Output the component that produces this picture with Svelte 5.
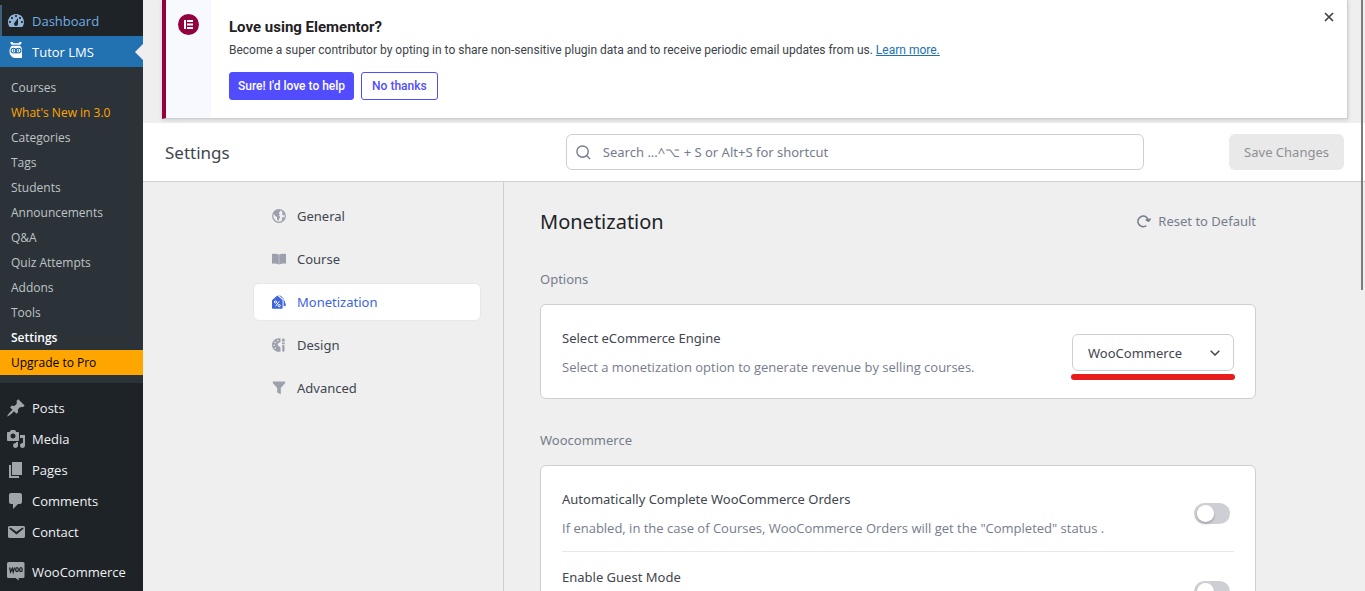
<script lang="ts">
  let engine = $state('WooCommerce');
  let search = $state('');
  let showNotice = $state(true);

  const submenu = [
    { label: 'Courses' },
    { label: "What's New in 3.0", kind: 'new' },
    { label: 'Categories' },
    { label: 'Tags' },
    { label: 'Students' },
    { label: 'Announcements' },
    { label: 'Q&A' },
    { label: 'Quiz Attempts' },
    { label: 'Addons' },
    { label: 'Tools' },
    { label: 'Settings', kind: 'current' },
    { label: 'Upgrade to Pro', kind: 'upgrade' },
  ];

  const dashboardIcon = 'M3.76 16h12.48c1.1-1.37 1.76-3.11 1.76-5 0-4.42-3.58-8-8-8s-8 3.58-8 8c0 1.89.66 3.63 1.76 5zM10 4c.55 0 1 .45 1 1s-.45 1-1 1-1-.45-1-1 .45-1 1-1zM6 6c.55 0 1 .45 1 1s-.45 1-1 1-1-.45-1-1 .45-1 1-1zm8 0c.55 0 1 .45 1 1s-.45 1-1 1-1-.45-1-1 .45-1 1-1zm-5.37 5.55L12 7v6c0 1.1-.9 2-2 2s-2-.9-2-2c0-.57.24-1.08.63-1.45zM4 10c.55 0 1 .45 1 1s-.45 1-1 1-1-.45-1-1 .45-1 1-1zm12 0c.55 0 1 .45 1 1s-.45 1-1 1-1-.45-1-1 .45-1 1-1z';

  const menu = [
    { label: 'Posts', icon: 'M10.44 3.02l1.82-1.82 6.36 6.35-1.83 1.82c-1.05-.68-2.48-.57-3.41.36l-.75.75c-.92.93-1.04 2.35-.35 3.41l-1.83 1.82-2.41-2.41-2.8 2.79c-.42.42-3.38 2.71-3.8 2.29s1.86-3.39 2.28-3.81l2.79-2.79L4.1 9.36l1.83-1.82c1.05.69 2.48.57 3.4-.36l.75-.75c.93-.92 1.05-2.35.36-3.41z' },
    { label: 'Media', icon: 'M13 11V4c0-.55-.45-1-1-1h-1.67L9 1H5L3.67 3H2c-.55 0-1 .45-1 1v7c0 .55.45 1 1 1h10c.55 0 1-.45 1-1zM7 4.5c1.38 0 2.5 1.12 2.5 2.5S8.38 9.5 7 9.5 4.5 8.38 4.5 7 5.62 4.5 7 4.5zM14 6h5v10.5c0 1.38-1.12 2.5-2.5 2.5S14 17.88 14 16.5s1.12-2.5 2.5-2.5c.17 0 .34.02.5.05V9h-3V6zm-4 8.05V13h2v3.5c0 1.38-1.12 2.5-2.5 2.5S7 17.88 7 16.5 8.12 14 9.5 14c.17 0 .34.02.5.05z' },
    { label: 'Pages', icon: 'M6 15V2h10v13H6zm-1 1h8v2H3V5h2v11z' },
    { label: 'Comments', icon: 'M5 2h9c1.1 0 2 .9 2 2v7c0 1.1-.9 2-2 2h-2l-5 5v-5H5c-1.1 0-2-.9-2-2V4c0-1.1.9-2 2-2z' },
    { label: 'Contact', icon: 'M3.87 4h13.25C18.37 4 19 4.59 19 5.79v8.42c0 1.19-.63 1.79-1.88 1.79H3.87c-1.25 0-1.88-.6-1.88-1.79V5.79c0-1.2.63-1.79 1.88-1.79zm6.62 8.6l6.74-5.53c.24-.2.43-.66.13-1.07-.29-.41-.82-.42-1.17-.17l-5.7 3.86L4.8 5.83c-.35-.25-.88-.24-1.17.17-.3.41-.11.87.13 1.07z' },
  ];

  const tabs = ['General', 'Course', 'Monetization', 'Design', 'Advanced'];
  let activeTab = $state('Monetization');

  let options = $state([
    {
      id: 'auto-complete',
      title: 'Automatically Complete WooCommerce Orders',
      text: 'If enabled, in the case of Courses, WooCommerce Orders will get the "Completed" status .',
      on: false,
    },
    { id: 'guest-mode', title: 'Enable Guest Mode', text: '', on: false },
  ]);
</script>

<div class="shell">
  <aside class="admin-menu">
    <a class="item dashboard" href="#dashboard">
      <svg viewBox="0 0 20 20"><path fill-rule="evenodd" d={dashboardIcon} /></svg>
      Dashboard
    </a>
    <a class="item active" href="#tutor">
      <svg viewBox="0 0 20 20">
        <path d="M4.500 0h2l1 1.200h5l1-1.200h2v1.200l-1.800 2.300c1.500 1.200 2.300 2.700 2.300 4.700V16h-6.200C6 16 3.500 13 3.500 9.200c0-2.700 1-4.500 2.700-5.700L4.500 1.200z" />
        <g fill="none" stroke="#2271b1" stroke-width="1.100">
          <path d="M6 3.200h8M10 6.200v5.600" />
          <circle cx="7.500" cy="8.600" r="2.400" />
          <circle cx="12.500" cy="8.600" r="2.400" />
          <path d="M7.700 7.300v2.400M12.300 7.300v2.400" />
        </g>
      </svg>
      Tutor LMS
    </a>
    <ul class="submenu">
      {#each submenu as entry}
        <li><a class={entry.kind} href="#{entry.label}">{entry.label}</a></li>
      {/each}
    </ul>
    {#each menu as entry}
      <a class="item" href="#{entry.label}">
        <svg viewBox="0 0 20 20"><path fill-rule="evenodd" d={entry.icon} /></svg>
        {entry.label}
      </a>
    {/each}
    <a class="item woo" href="#woocommerce">
      <svg viewBox="0 0 20 20">
        <path d="M2.500 0h14.500A1.500 1.500 0 0 1 18.500 1.500v13a1.500 1.500 0 0 1-1.500 1.500H12.500l.5 2.500L9.500 16H2.500A1.500 1.500 0 0 1 1 14.500v-13A1.500 1.500 0 0 1 2.500 0z" />
        <g fill="none" stroke="#1d2327" stroke-width="1.300">
          <path d="M3.700 5.500l.9 4.500 1.700-3.500.9 3.500L8.600 5.500" />
          <ellipse cx="11" cy="7.700" rx="1.300" ry="2" />
          <ellipse cx="14.900" cy="7.700" rx="1.300" ry="2" />
        </g>
      </svg>
      WooCommerce
    </a>
  </aside>

  <main>
    {#if showNotice}
      <section class="notice">
        <div class="notice-aside">
          <svg viewBox="0 0 21 21">
            <circle cx="10.500" cy="10.500" r="10.500" fill="#93003f" />
            <path d="M6 6h2v9H6zM9 6h6v2H9zM9 9.500h6v2H9zM9 13h6v2H9z" fill="#fff" />
          </svg>
        </div>
        <div class="notice-body">
          <h3>Love using Elementor?</h3>
          <p>Become a super contributor by opting in to share non-sensitive plugin data and to receive periodic email updates from us. <a href="#learn">Learn more.</a></p>
          <div class="notice-actions">
            <button class="primary">Sure! I'd love to help</button>
            <button onclick={() => (showNotice = false)}>No thanks</button>
          </div>
        </div>
        <button class="dismiss" aria-label="Dismiss" onclick={() => (showNotice = false)}>
          <svg viewBox="0 0 10 10"><path d="M1 1l8 8M9 1L1 9" /></svg>
        </button>
      </section>
    {/if}

    <header class="topbar">
      <h1>Settings</h1>
      <label class="search">
        <svg viewBox="0 0 16 16"><circle cx="7" cy="7" r="6" /><path d="M11.500 11.500L15 15" /></svg>
        <input type="text" aria-label="Search" placeholder="Search ...^⌥ + S or Alt+S for shortcut" bind:value={search} />
      </label>
      <button class="save" disabled>Save Changes</button>
    </header>

    <div class="settings">
      <nav>
        {#each tabs as tab}
          <a href="#{tab}" class:selected={activeTab === tab} onclick={() => (activeTab = tab)}>
            <svg viewBox="0 0 14 14">
              {#if tab === 'General'}
                <circle cx="7" cy="7" r="6.300" fill="none" stroke="currentColor" stroke-width="1.200" />
                <path d="M2 3.500L4.500 1.300 7.500 1l.8 1.500-1.600 1.200 1 1.500L7 6.500 8.200 8 7 10l-.6 2L5 10.500V8L3 6.800 1.500 4.500zM9.500 1.500l2.300 1.800L13 6l-1.500.5L10 5l.5-1.500zM10 8.500l2.500-.5-.8 2.500-1.900 1.300z" />
              {:else if tab === 'Course'}
                <path d="M0 2c2.500-.6 5-.4 6.800.5v10C4.500 11.500 2.300 11.300 0 11.800zM14 2c-2.500-.6-5-.4-6.800.5v10c2.300-1 4.500-1.200 6.800-.7z" />
              {:else if tab === 'Monetization'}
                <path d="M0 5.200L5.300.6 10.600 5v7.800c0 .6-.4 1-1 1H1c-.6 0-1-.4-1-1z" />
                <path d="M6.800.3c3.600.5 5.600 3.700 7.200 10.300l-2.400.9V4.300L6.800.3z" />
                <g fill="none" stroke="#fff" stroke-width="1">
                  <circle cx="3.500" cy="7" r="1.100" /><circle cx="7.200" cy="10.600" r="1.100" /><path d="M7.200 6.300l-3.700 5" />
                </g>
              {:else if tab === 'Design'}
                <path fill-rule="evenodd" d="M8.500.3v3.400L6.400 5.200c-1.500 1-.6 2.600.7 3.200.8.400 1.400.7 1.400 1.600v3.700C3.500 14.500 0 11 0 7S3.500-.5 8.500.3zM5.800 1.800a.8.800 0 1 0 0 1.600.8.800 0 0 0 0-1.600zM3.100 3.600a.8.800 0 1 0 0 1.600.8.800 0 0 0 0-1.600zM2.200 6.500a.8.800 0 1 0 0 1.600.8.800 0 0 0 0-1.600zM3.200 9.400a.8.800 0 1 0 0 1.600.8.800 0 0 0 0-1.600z" />
                <path d="M11.300 0c1.200 1.200 1.800 2.300 1.500 3.500H9.900c-.3-1.200.3-2.300 1.400-3.500zM10 4.500h2.700V6H10zM10.300 6.800h2.200v6c0 1.300-2.200 1.300-2.200 0z" />
              {:else}
                <path d="M.8.500h12.400V2L8.800 6.900v6.300L5.200 11.500V6.900L.8 2z" />
              {/if}
            </svg>
            {tab}
          </a>
        {/each}
      </nav>

      <section class="content">
        <div class="content-head">
          <h2>Monetization</h2>
          <button class="reset">
            <svg viewBox="0 0 14 14"><path d="M9.300 11.700A5.300 5.300 0 1 1 11.500 7M8.800 5.500l2.800 1.800 2-2.800" /></svg>
            Reset to Default
          </button>
        </div>

        <h4>Options</h4>
        <div class="card">
          <div class="row">
            <div class="row-text">
              <label for="engine">Select eCommerce Engine</label>
              <p>Select a monetization option to generate revenue by selling courses.</p>
            </div>
            <div class="select">
              <select id="engine" bind:value={engine}>
                <option>WooCommerce</option>
                <option>Native</option>
                <option>Disable Monetization</option>
              </select>
              <svg viewBox="0 0 10 6"><path d="M.7.7L5 5 9.300.7" /></svg>
              <span class="marker"></span>
            </div>
          </div>
        </div>

        <h4>Woocommerce</h4>
        <div class="card">
          {#each options as option}
            <div class="row">
              <div class="row-text">
                <label for={option.id}>{option.title}</label>
                {#if option.text}
                  <p>{option.text}</p>
                {/if}
              </div>
              <input class="toggle" type="checkbox" id={option.id} bind:checked={option.on} />
            </div>
          {/each}
        </div>
      </section>
    </div>
  </main>
  <div class="scroll-thumb"></div>
</div>

<style>
  :global(body) {
    background: #efefef;
  }

  .shell {
    display: flex;
    height: 100vh;
    overflow: hidden;
    position: relative;
    font-family: "Segoe UI", "Noto Sans", sans-serif;
    font-size: 13px;
    color: #41454f;
  }

  .shell :is(h1, h2, h3, h4, p, ul) {
    margin: 0;
    padding: 0;
    font-weight: 400;
  }

  button, input, select {
    font-family: inherit;
    font-size: inherit;
    box-sizing: border-box;
  }

  /* WordPress admin menu */
  .admin-menu {
    flex: 0 0 143px;
    padding-top: 5px;
    background: #1d2327;
    font-family: "Segoe UI", "Open Sans", sans-serif;
  }

  .item {
    display: flex;
    align-items: center;
    gap: 6px;
    height: 31px;
    padding-left: 6px;
    color: #f0f0f1;
    text-decoration: none;
    position: relative;
  }

  .item svg {
    width: 20px;
    height: 20px;
    fill: #a0a5aa;
  }

  .item.dashboard {
    color: #72aee6;
    box-shadow: inset 2px 0 0 #3f6078;
  }

  .item.dashboard svg {
    fill: #8fb4d8;
  }

  .item.active {
    background: #2271b1;
    color: #fff;
  }

  .item.active svg {
    fill: #fff;
  }

  .item.active::after {
    content: "";
    position: absolute;
    right: 0;
    top: 8px;
    border: 8px solid transparent;
    border-left-width: 0;
    border-right-color: #efefef;
  }

  .item.woo {
    margin-top: 9px;
  }

  .shell .submenu {
    list-style: none;
    margin-bottom: 9px;
    padding: 8px 0;
    background: #2c3338;
  }

  .submenu a {
    display: block;
    padding: 0 11px;
    font-size: 12px;
    line-height: 25px;
    color: #bfc3c7;
    text-decoration: none;
  }

  .submenu a.new {
    color: #ffa500;
  }

  .submenu a.current {
    color: #fff;
    font-weight: 600;
  }

  .submenu a.upgrade {
    background: #ffa500;
    color: #000;
    font-weight: 500;
  }

  main {
    flex: 1;
    min-width: 0;
  }

  /* Elementor notice */
  .notice {
    display: flex;
    margin: 0 17px 4px 19px;
    position: relative;
    background: #fff;
    border: 1px solid #ccd0d4;
    border-top: 0;
    border-left: 4px solid #93003f;
    box-shadow: 0 1px 4px rgba(0, 0, 0, 0.15);
    font-family: Roboto, sans-serif;
  }

  .notice-aside {
    width: 45px;
    padding-top: 14px;
    text-align: center;
    background: #f8f8ff;
  }

  .notice-aside svg {
    width: 21px;
    height: 21px;
  }

  .notice-body {
    padding: 17px 18px 18px;
  }

  .notice h3 {
    font-size: 15px;
    font-weight: 700;
    line-height: 20px;
    color: #1f2124;
  }

  .notice p {
    margin-top: 4px;
    font-size: 12px;
    line-height: 18px;
    color: #3c434a;
  }

  .notice p a {
    color: #2271b1;
  }

  .notice-actions {
    display: flex;
    gap: 7px;
    margin-top: 13px;
  }

  .notice-actions button {
    height: 28px;
    padding: 0 10px;
    border: 1px solid #524cff;
    border-radius: 3px;
    background: #fff;
    color: #524cff;
    font-size: 12px;
    font-weight: 500;
  }

  .notice-actions .primary {
    padding: 0 8px;
    background: #524cff;
    color: #fff;
  }

  .dismiss {
    position: absolute;
    top: 10px;
    right: 11px;
    display: flex;
    padding: 2px;
    border: 0;
    background: none;
  }

  .dismiss svg {
    width: 10px;
    height: 10px;
    stroke: #3c434a;
    stroke-width: 1.7;
  }

  /* Settings header */
  .topbar {
    display: grid;
    grid-template-columns: 34% 1fr 17%;
    align-items: center;
    height: 58px;
    padding: 0 21px 0 22px;
    background: #fff;
    border-bottom: 1px solid #cdcfd5;
  }

  .topbar h1 {
    font-size: 17px;
  }

  .search {
    display: flex;
    align-items: center;
    gap: 12px;
    height: 34px;
    padding: 0 9px;
    border: 1px solid #cdcfd5;
    border-radius: 6px;
  }

  .search svg {
    width: 15px;
    height: 15px;
    fill: none;
    stroke: #757c8e;
    stroke-width: 1.5;
  }

  .search input {
    flex: 1;
    border: 0;
    padding: 0;
    outline: 0;
    color: #41454f;
  }

  .search input::placeholder {
    color: #757c8e;
  }

  .save {
    justify-self: end;
    height: 36px;
    padding: 0 15px;
    border: 0;
    border-radius: 6px;
    background: #e9e9e9;
    color: #8d8f94;
  }

  .settings {
    display: flex;
    min-height: 100%;
  }

  nav {
    display: flex;
    flex-direction: column;
    align-items: flex-end;
    gap: 5px;
    flex: 0 0 361px;
    box-sizing: border-box;
    padding: 15px 22px 0 0;
    border-right: 1px solid #cdcfd5;
  }

  nav a {
    display: flex;
    align-items: center;
    gap: 11px;
    box-sizing: border-box;
    width: 228px;
    height: 38px;
    padding-left: 18px;
    border: 1px solid transparent;
    border-radius: 6px;
    color: #41454f;
    text-decoration: none;
  }

  nav a svg {
    width: 14px;
    height: 14px;
    fill: #9ca0ac;
    color: #9ca0ac;
  }

  nav a.selected {
    background: #fff;
    border-color: #e6e8ec;
    color: #3e64de;
  }

  nav a.selected svg {
    fill: #3e64de;
  }

  .content {
    flex: 0 1 716px;
    min-width: 0;
    padding: 24px 36px;
  }

  .content-head {
    display: flex;
    justify-content: space-between;
    align-items: center;
    height: 30px;
    margin-bottom: 33px;
  }

  .shell h2 {
    font-size: 20px;
    color: #212327;
  }

  .reset {
    display: flex;
    align-items: center;
    gap: 7px;
    padding: 0;
    border: 0;
    background: none;
    color: #757c8e;
  }

  .reset svg {
    width: 14px;
    height: 14px;
    fill: none;
    stroke: #757c8e;
    stroke-width: 1.5;
  }

  .shell .content h4 {
    margin: 31px 0 15px;
    line-height: 20px;
    color: #757c8e;
  }

  .card {
    padding: 8px 21px;
    background: #fff;
    border: 1px solid #cdcfd5;
    border-radius: 6px;
  }

  .row {
    display: flex;
    justify-content: space-between;
    align-items: center;
    padding: 15px 0 13px;
  }

  .row + .row {
    border-top: 1px solid #e6e8ec;
  }

  .row-text {
    min-height: 49px;
  }

  .row-text label {
    display: block;
    line-height: 20px;
  }

  .shell .row-text p {
    margin-top: 9px;
    font-family: "Segoe UI", "Open Sans", sans-serif;
    font-size: 13px;
    line-height: 20px;
    color: #757c8e;
  }

  .select {
    position: relative;
  }

  .select select {
    appearance: none;
    width: 162px;
    height: 37px;
    padding: 0 15px;
    border: 1px solid #cdcfd5;
    border-radius: 6px;
    background: #fff;
    color: #41454f;
  }

  .select svg {
    position: absolute;
    right: 14px;
    top: 16px;
    width: 10px;
    height: 6px;
    fill: none;
    stroke: #41454f;
    stroke-width: 1.5;
    pointer-events: none;
  }

  .marker {
    position: absolute;
    left: -1px;
    right: -1px;
    bottom: -9px;
    height: 6px;
    border-radius: 3px;
    background: #e81c1c;
  }

  .toggle {
    appearance: none;
    flex: none;
    width: 36px;
    height: 21px;
    margin: 0 4px 0 0;
    border-radius: 11px;
    background: #cdcfd5;
  }

  .toggle::before {
    content: "";
    display: block;
    width: 17px;
    height: 17px;
    margin: 2px 3px;
    border-radius: 50%;
    background: #fff;
    box-shadow: 0 2px 3px rgba(0, 0, 0, 0.2);
  }

  .toggle:checked {
    background: #3e64de;
  }

  .toggle:checked::before {
    margin-left: 16px;
  }

  .scroll-thumb {
    position: absolute;
    top: 0;
    right: 2px;
    width: 2px;
    height: 49%;
    background: #7b7b7b;
  }
</style>
